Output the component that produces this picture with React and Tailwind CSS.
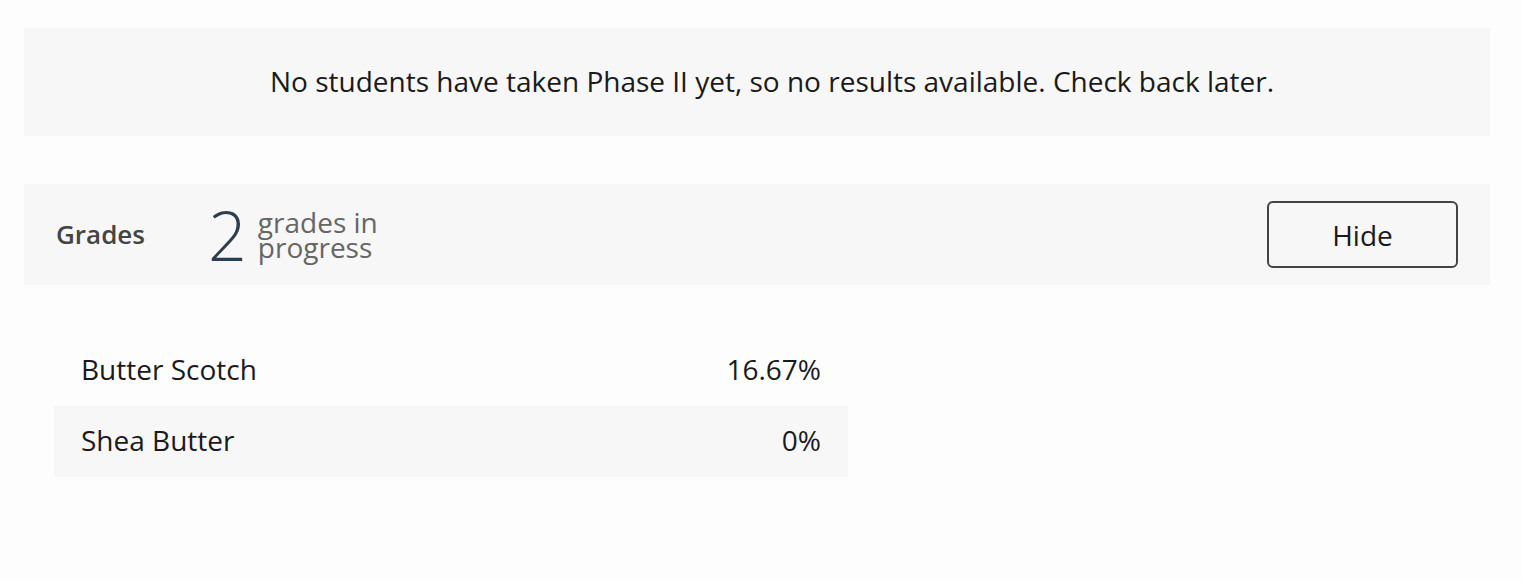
import React from 'react';

const rows = [
  { name: 'Butter Scotch', grade: '16.67%' },
  { name: 'Shea Butter', grade: '0%' }
];

export default function App() {
  return (
    <div className="min-h-[580px] bg-[#fdfdfd] pl-6 pr-8 pt-7 font-['Open_Sans',sans-serif] text-[#1a1a1a]">
      <div className="flex h-[108px] items-center justify-center bg-[#f7f7f7] pb-[2px] pl-[30px] text-[28px]">
        No students have taken Phase II yet, so no results available. Check back later.
      </div>

      <div className="mt-12 flex h-[101px] items-center bg-[#f7f7f7] pl-8 pr-8">
        <span className="w-[152px] text-[26px] font-semibold text-[#444]">Grades</span>
        <span className="text-[68px] font-light leading-none text-[#2c3e50]">2</span>
        <span className="ml-[11px] flex flex-col text-[28px] leading-[25px] text-[#666]">
          <span>grades in</span>
          <span>progress</span>
        </span>
        <button
          type="button"
          className="ml-auto h-[67px] w-[191px] rounded-md border-2 border-[#444] text-[28px] text-[#1a1a1a]"
        >
          Hide
        </button>
      </div>

      <div className="ml-[30px] mt-[50px] w-[794px]">
        {rows.map((row, i) => (
          <div
            key={row.name}
            className={`flex h-[71px] items-center justify-between px-[27px] pb-[3px] text-[28px] ${
              i % 2 === 1 ? 'bg-[#f7f7f7]' : ''
            }`}
          >
            <span>{row.name}</span>
            <span>{row.grade}</span>
          </div>
        ))}
      </div>
    </div>
  );
}
